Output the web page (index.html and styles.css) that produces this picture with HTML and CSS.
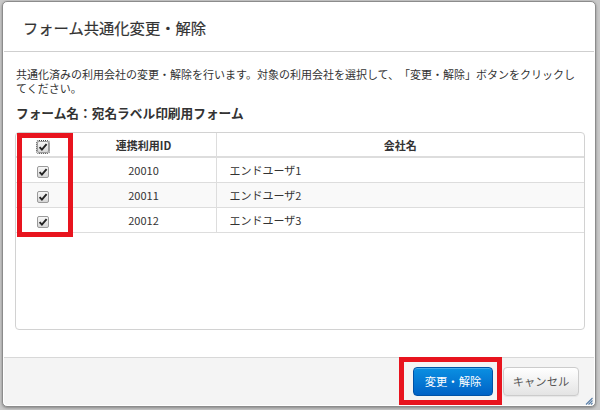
FILE: index.html
```html
<!DOCTYPE html>
<html lang="ja">
<head>
<meta charset="utf-8">
<title>フォーム共通化変更・解除</title>
<link rel="stylesheet" href="styles.css">
</head>
<body>
<div class="dialog">
  <div class="dlg-header">
    <h1 class="dlg-title">フォーム共通化変更・解除</h1>
  </div>
  <div class="dlg-body">
    <p class="desc">共通化済みの利用会社の変更・解除を行います。対象の利用会社を選択して、「変更・解除」ボタンをクリックしてください。</p>
    <div class="form-name">フォーム名：宛名ラベル印刷用フォーム</div>
    <div class="table-box">
      <table class="grid">
        <colgroup><col class="c-check"><col class="c-id"><col></colgroup>
        <thead>
          <tr>
            <th class="cell-check"><span class="cb cb-focus"><svg viewBox="0 0 12 12" width="12" height="12"><path d="M2.6 6.2 L4.9 8.6 L9.6 3.2" fill="none" stroke="#222" stroke-width="1.9"/></svg></span></th>
            <th>連携利用ID</th>
            <th>会社名</th>
          </tr>
        </thead>
        <tbody>
          <tr>
            <td class="cell-check"><span class="cb"><svg viewBox="0 0 12 12" width="12" height="12"><path d="M2.6 6.2 L4.9 8.6 L9.6 3.2" fill="none" stroke="#222" stroke-width="1.9"/></svg></span></td>
            <td class="cell-id">20010</td>
            <td class="cell-name">エンドユーザ1</td>
          </tr>
          <tr class="odd">
            <td class="cell-check"><span class="cb"><svg viewBox="0 0 12 12" width="12" height="12"><path d="M2.6 6.2 L4.9 8.6 L9.6 3.2" fill="none" stroke="#222" stroke-width="1.9"/></svg></span></td>
            <td class="cell-id">20011</td>
            <td class="cell-name">エンドユーザ2</td>
          </tr>
          <tr>
            <td class="cell-check"><span class="cb"><svg viewBox="0 0 12 12" width="12" height="12"><path d="M2.6 6.2 L4.9 8.6 L9.6 3.2" fill="none" stroke="#222" stroke-width="1.9"/></svg></span></td>
            <td class="cell-id">20012</td>
            <td class="cell-name">エンドユーザ3</td>
          </tr>
        </tbody>
      </table>
    </div>
  </div>
  <div class="dlg-footer">
    <button class="btn btn-primary">変更・解除</button>
    <button class="btn btn-default">キャンセル</button>
  </div>
</div>
<div class="mark mark-checks"></div>
<div class="mark mark-button"></div>
<svg class="grip" viewBox="0 0 8 8" width="8" height="8"><path d="M7.5 1 L1 7.5 M7.5 3.5 L3.5 7.5 M7.5 6 L6 7.5" stroke="#5a7fa8" stroke-width="1.1"/></svg>
</body>
</html>
```
FILE: styles.css
```css
html, body {
  margin: 0;
  padding: 0;
}
body {
  width: 600px;
  height: 410px;
  overflow: hidden;
  background: #c9c9c9;
  font-family: "Noto Sans CJK JP", "Noto Sans", "Liberation Sans", sans-serif;
  color: #333;
  position: relative;
  text-spacing-trim: space-all;
}
.dialog {
  box-sizing: border-box;
  margin: 1px 0 0 2px;
  width: 594px;
  height: 406px;
  border: 1px solid #8c8c8c;
  border-radius: 5px;
  background: #fff;
  padding: 1px;
  display: flex;
  flex-direction: column;
  box-shadow: 0 1px 3px rgba(0,0,0,0.35);
}
.dlg-header {
  box-sizing: border-box;
  height: 49px;
  border-bottom: 1px solid #cfcfcf;
  padding: 0 0 0 19px;
  display: flex;
  align-items: center;
  flex: none;
}
.dlg-title {
  margin: 0;
  font-size: 15.3px;
  font-weight: normal;
  line-height: 20px;
  color: #333;
  padding-bottom: 1px;
  -webkit-text-stroke: 0.2px #333;
}
.dlg-body {
  flex: 1;
  padding: 15px 9px 0 11px;
}
.desc {
  margin: 0;
  padding-left: 1px;
  font-size: 11px;
  line-height: 14px;
  text-spacing-trim: space-all;
}
.form-name {
  margin-top: 9px;
  padding-left: 1px;
  font-size: 12.7px;
  line-height: 18px;
  font-weight: bold;
}
.table-box {
  box-sizing: border-box;
  margin-top: 10px;
  height: 198px;
  border: 1px solid #d2d2d2;
  border-radius: 4px;
  overflow: hidden;
}
.grid {
  width: 100%;
  border-collapse: collapse;
  table-layout: fixed;
  font-size: 11px;
}
.c-check { width: 55px; }
.c-id { width: 145px; }
.grid th {
  height: 23px;
  padding: 0;
  font-weight: bold;
  text-align: center;
  border-bottom: 2px solid #dddddd;
  border-right: 1px solid #dddddd;
  vertical-align: middle;
}
.grid td {
  height: 24px;
  padding: 0;
  border-bottom: 1px solid #dddddd;
  border-right: 1px solid #dddddd;
  vertical-align: middle;
}
.grid th:last-child, .grid td:last-child {
  border-right: none;
}
.grid tr.odd td {
  background: #f9f9f9;
}
.cell-check {
  text-align: center;
}
.cell-id {
  text-align: center;
}
.cell-name {
  padding-left: 13px !important;
}
.cb {
  box-sizing: border-box;
  display: inline-block;
  width: 12px;
  height: 12px;
  border: 1px solid #9a9a9a;
  border-radius: 2px;
  background: linear-gradient(#f7f7f7, #d6d6d6);
  vertical-align: middle;
  position: relative;
}
.cb svg {
  position: absolute;
  left: -1px;
  top: -1px;
}
.cb-focus {
  outline: 1px dotted #444;
  outline-offset: 0;
}
.dlg-footer {
  box-sizing: border-box;
  flex: none;
  height: 48px;
  border-top: 1px solid #d8d8d8;
  background: #f4f4f4;
  border-radius: 0 0 4px 4px;
  display: flex;
  justify-content: flex-end;
  align-items: flex-start;
  gap: 10px;
  padding: 9px 15px 0 0;
}
.btn {
  box-sizing: border-box;
  height: 29px;
  border-radius: 4px;
  font-family: "Noto Sans CJK JP", "Noto Sans", sans-serif;
  font-size: 11.3px;
  line-height: 27px;
  padding: 0;
  cursor: pointer;
  text-spacing-trim: space-all;
}
.btn-primary {
  width: 80px;
  color: #fff;
  border: 1px solid #0052a6;
  background: linear-gradient(#0a90e2, #0062c6);
  box-shadow: inset 0 1px 0 rgba(255,255,255,0.25);
}
.btn-default {
  width: 76px;
  color: #555;
  border: 1px solid #cccccc;
  background: linear-gradient(#ffffff, #e4e4e4);
  box-shadow: 0 1px 1px rgba(0,0,0,0.06);
}
.mark {
  position: absolute;
  box-sizing: border-box;
  border: 5px solid #e8141e;
}
.mark-checks {
  left: 17px;
  top: 133px;
  width: 56px;
  height: 104px;
}
.mark-button {
  left: 399px;
  top: 357px;
  width: 103px;
  height: 48px;
}
.grip {
  position: absolute;
  left: 585px;
  top: 397px;
}
```
